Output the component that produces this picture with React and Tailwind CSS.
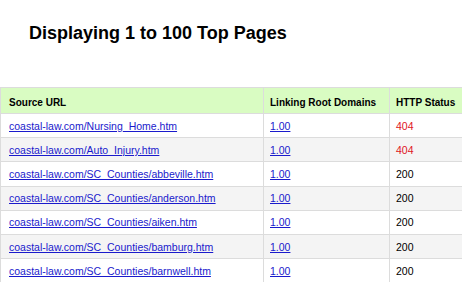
const ROWS = [
  { url: "coastal-law.com/Nursing_Home.htm", lrd: "1.00", status: "404" },
  { url: "coastal-law.com/Auto_Injury.htm", lrd: "1.00", status: "404" },
  { url: "coastal-law.com/SC_Counties/abbeville.htm", lrd: "1.00", status: "200" },
  { url: "coastal-law.com/SC_Counties/anderson.htm", lrd: "1.00", status: "200" },
  { url: "coastal-law.com/SC_Counties/aiken.htm", lrd: "1.00", status: "200" },
  { url: "coastal-law.com/SC_Counties/bamburg.htm", lrd: "1.00", status: "200" },
  { url: "coastal-law.com/SC_Counties/barnwell.htm", lrd: "1.00", status: "200" },
];

export default function App() {
  return (
    <div className="w-[462px] h-[282px] overflow-hidden bg-white font-['Liberation_Sans',Arial,sans-serif] text-black">
      <h1 className="pl-[29px] pt-[22px] h-[87px] text-[18px] font-bold leading-[22px]">
        Displaying 1 to 100 Top Pages
      </h1>

      <table className="w-[480px] border-collapse table-fixed text-[10.5px]">
        <colgroup>
          <col className="w-[263px]" />
          <col className="w-[126px]" />
          <col />
        </colgroup>
        <thead>
          <tr className="h-[26px] bg-[#d9fcc2] text-[10px]">
            <th className="border border-[#dcdcdc] pl-[8px] pt-[3px] text-left font-bold">Source URL</th>
            <th className="border border-[#dcdcdc] pl-[6px] pt-[3px] text-left font-bold">Linking Root Domains</th>
            <th className="border border-[#dcdcdc] pl-[6px] pt-[3px] text-left font-bold">HTTP Status</th>
          </tr>
        </thead>
        <tbody>
          {ROWS.map((r, i) => (
            <tr key={r.url} className={`h-[24.2px] ${i % 2 ? "bg-[#f4f4f4]" : "bg-white"}`}>
              <td className="border border-[#dcdcdc] pl-[8px] pt-[2px]">
                <a href="#" className="text-[#1a1acc] underline">{r.url}</a>
              </td>
              <td className="border border-[#dcdcdc] pl-[6px] pt-[2px]">
                <a href="#" className="text-[#1a1acc] underline">{r.lrd}</a>
              </td>
              <td className={`border border-[#dcdcdc] pl-[6px] pt-[2px] ${r.status === "404" ? "text-[#e0141e]" : ""}`}>
                {r.status}
              </td>
            </tr>
          ))}
        </tbody>
      </table>
    </div>
  );
}
